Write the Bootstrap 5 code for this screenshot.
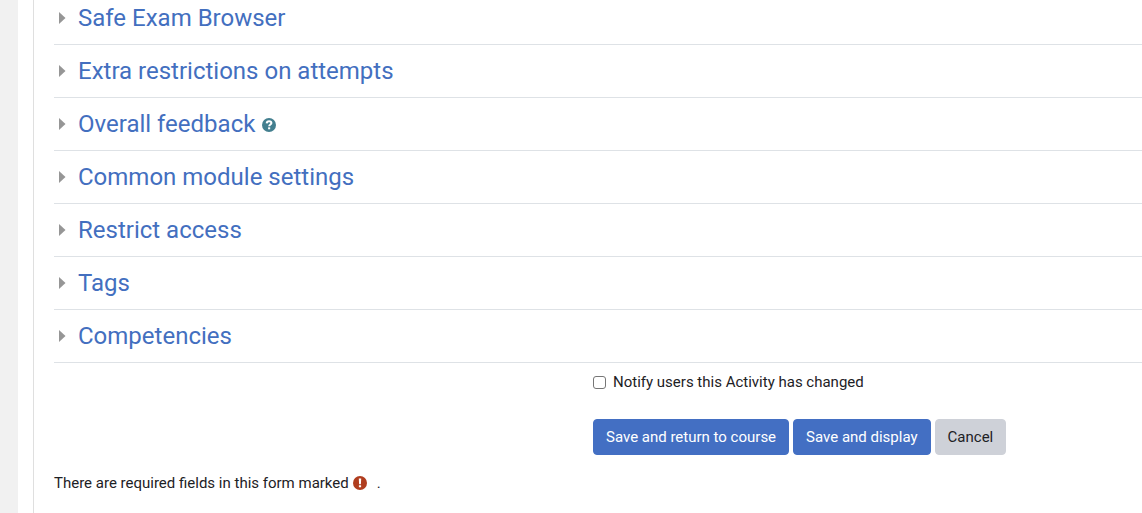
<!DOCTYPE html>
<html lang="en">
<head>
<meta charset="utf-8">
<meta name="viewport" content="width=device-width, initial-scale=1">
<title>Activity settings</title>
<link href="https://cdn.jsdelivr.net/npm/bootstrap@5.3.0/dist/css/bootstrap.min.css" rel="stylesheet">
<style>
body { font-family: Roboto, "Liberation Sans", sans-serif; font-size: 15px; line-height: 22px; color: #1d2125; background: #fff; }
.page-edge { width: 18px; background: #f1f1f1; }
.region-main { margin-left: 15px; padding-left: 20px; border-left: 1px solid #dfdfdf; min-width: 0; }
.form-section { padding: 8px 5px; border-bottom: 1px solid #dee2e6; }
.form-section:first-child { padding-top: 0; }
.section-title { font-size: 24px; line-height: 36px; font-weight: 400; }
.section-title a { color: #436fbf; }
.caret-icon { width: 7px; height: 12px; margin-right: 12px; fill: #969696; }
.help-button { margin-left: 7px; margin-top: 2px; line-height: 0; }
.status-icon { width: 14px; height: 14px; }
.form-actions { margin-left: calc(50% - 5px); }
.notify-row { padding-top: 8px; margin-bottom: 26px; }
.notify-row .form-check-input { width: 13px; height: 13px; border: 1px solid #767676; border-radius: 3px; margin: 0 7px 0 0; }
.form-actions .btn { font-size: 15px; line-height: 22px; padding: 6px 12px; border-radius: 4px; }
.btn-save { --bs-btn-color: #fff; --bs-btn-bg: #436fc3; --bs-btn-border-color: #436fc3; --bs-btn-hover-color: #fff; --bs-btn-hover-bg: #385da5; }
.btn-cancel { --bs-btn-color: #1d2125; --bs-btn-bg: #ced1d8; --bs-btn-border-color: #ced1d8; --bs-btn-hover-bg: #b8bcc4; }
.required-note { margin-top: 17px; }
.required-note .status-icon { margin: 0 10px 0 4px; }
</style>
</head>
<body>
<svg class="d-none" aria-hidden="true">
  <symbol id="caret" viewBox="0 0 7 12"><path d="M0 0 6.500 6 0 12z"/></symbol>
</svg>
<div class="d-flex min-vh-100">
  <div class="page-edge flex-shrink-0"></div>
  <main class="region-main flex-grow-1">
    <form>
      <div>
        <section class="form-section"><h3 class="section-title d-flex align-items-center mb-0"><a href="#" class="text-decoration-none d-flex align-items-center"><svg class="caret-icon"><use href="#caret"/></svg>Safe Exam Browser</a></h3></section>
        <section class="form-section"><h3 class="section-title d-flex align-items-center mb-0"><a href="#" class="text-decoration-none d-flex align-items-center"><svg class="caret-icon"><use href="#caret"/></svg>Extra restrictions on attempts</a></h3></section>
        <section class="form-section"><h3 class="section-title d-flex align-items-center mb-0"><a href="#" class="text-decoration-none d-flex align-items-center"><svg class="caret-icon"><use href="#caret"/></svg>Overall feedback</a>
          <button type="button" class="help-button btn p-0 border-0" aria-label="Help with Overall feedback"><svg class="status-icon" viewBox="0 0 14 14"><circle cx="7" cy="7" r="7" fill="#437f8f"/><path d="M4.700 5.400C4.800 3.900 5.800 3.200 7.100 3.200c1.300 0 2.300.7 2.300 1.900C9.400 6.500 7.200 6.500 7.200 8.300" fill="none" stroke="#fff" stroke-width="2"/><path d="M6.100 9.300h2.100v2H6.100z" fill="#fff"/></svg></button></h3></section>
        <section class="form-section"><h3 class="section-title d-flex align-items-center mb-0"><a href="#" class="text-decoration-none d-flex align-items-center"><svg class="caret-icon"><use href="#caret"/></svg>Common module settings</a></h3></section>
        <section class="form-section"><h3 class="section-title d-flex align-items-center mb-0"><a href="#" class="text-decoration-none d-flex align-items-center"><svg class="caret-icon"><use href="#caret"/></svg>Restrict access</a></h3></section>
        <section class="form-section"><h3 class="section-title d-flex align-items-center mb-0"><a href="#" class="text-decoration-none d-flex align-items-center"><svg class="caret-icon"><use href="#caret"/></svg>Tags</a></h3></section>
        <section class="form-section"><h3 class="section-title d-flex align-items-center mb-0"><a href="#" class="text-decoration-none d-flex align-items-center"><svg class="caret-icon"><use href="#caret"/></svg>Competencies</a></h3></section>
      </div>
      <div class="form-actions">
        <div class="notify-row d-flex align-items-center">
          <input class="form-check-input flex-shrink-0" type="checkbox" id="notify">
          <label for="notify">Notify users this Activity has changed</label>
        </div>
        <div class="d-flex flex-wrap gap-1">
          <button type="submit" class="btn btn-save">Save and return to course</button>
          <button type="submit" class="btn btn-save">Save and display</button>
          <button type="button" class="btn btn-cancel">Cancel</button>
        </div>
      </div>
      <div class="required-note d-flex align-items-center">
        <span>There are required fields in this form marked</span>
        <svg class="status-icon" viewBox="0 0 14 14" role="img" aria-label="Required field"><circle cx="7" cy="7" r="7" fill="#b03d1e"/><path d="M5.800 2.500h2.400L7.900 8.200H6.100zM5.900 9.200h2.200v2.100H5.900z" fill="#fff"/></svg>
        <span>.</span>
      </div>
    </form>
  </main>
</div>
<script src="https://cdn.jsdelivr.net/npm/bootstrap@5.3.0/dist/js/bootstrap.bundle.min.js"></script>
</body>
</html>
